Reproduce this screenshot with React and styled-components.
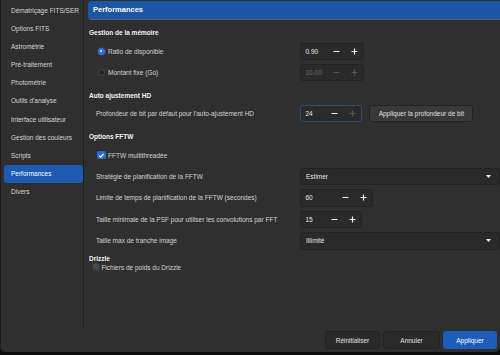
import React from 'react';
import styled, { createGlobalStyle } from 'styled-components';

//GLOBAL
const GlobalStyle = createGlobalStyle`
	html, body {
		margin: 0;
		padding: 0;
		background: #0c0c0c;
	}
	body {
		font-family: "Liberation Sans", Arial, sans-serif;
	}
`

//WINDOW
const Window = styled.div`
	width: 500px;
	height: 352px;
	background: #2f2f2f;
	border-radius: 0 0 5px 5px;
	box-shadow: inset 1px 0 0 #1c1c1c;
	display: flex;
	flex-direction: column;
	overflow: hidden;
	color: #d6d6d6;
	font-size: 6.5px;
`
const Main = styled.div`
	display: flex;
	height: 328px;
`

//SIDEBAR
const Sidebar = styled.ul`
	width: 79px;
	margin: 0;
	padding: 1.7px 0 0 4px;
	list-style: none;
	border-right: 1px solid #1f1f1f;
`
const SideItem = styled.li`
	height: 18.15px;
	line-height: 18.15px;
	padding-left: 7px;
	border-radius: 3px;
	white-space: nowrap;
	color: ${p => p.$active ? '#ffffff' : '#d4d4d4'};
	background: ${p => p.$active ? '#1d5ab2' : 'transparent'};
`

//CONTENT
const Content = styled.div`
	flex: 1;
	display: flex;
	flex-direction: column;
	padding-left: 4px;
`
const Header = styled.div`
	height: 17.5px;
	line-height: 17.5px;
	margin-top: 1px;
	padding-left: 5px;
	border-radius: 4px 0 0 4px;
	border-bottom: 1.5px solid #596071;
	background: #1b55a5;
	color: #ffffff;
	font-size: 7.5px;
	font-weight: bold;
`
const Body = styled.div`
	padding-left: 1px;
`
const Title = styled.div`
	height: ${p => p.$h || 12}px;
	line-height: ${p => p.$h || 12}px;
	margin-top: ${p => p.$top}px;
	color: #f2f2f2;
	font-weight: bold;
`
const Row = styled.div`
	display: grid;
	grid-template-columns: 211px 1fr;
	align-items: center;
	height: ${p => p.$h || 17}px;
	margin-top: ${p => p.$top}px;
`
const Label = styled.div`
	display: flex;
	align-items: center;
	gap: ${p => p.$gap || 0}px;
	padding-left: ${p => p.$indent}px;
	white-space: nowrap;
	color: #d4d4d4;
`
const Field = styled.div`
	display: flex;
	align-items: center;
	height: 100%;
`

//RADIO / CHECKBOX
const Radio = styled.span`
	box-sizing: border-box;
	flex: none;
	width: 7px;
	height: 7px;
	border-radius: 50%;
	display: flex;
	align-items: center;
	justify-content: center;
	background: ${p => p.$on ? '#2a6ad8' : '#222222'};
	border: 1px solid ${p => p.$on ? '#3b7af0' : '#484848'};
	box-shadow: ${p => p.$on ? '0 0 2px #2a6ad8' : 'none'};
	&::after {
		content: '';
		width: 2.4px;
		height: 2.4px;
		border-radius: 50%;
		background: ${p => p.$on ? '#ffffff' : 'transparent'};
	}
`
const Check = styled.span`
	box-sizing: border-box;
	flex: none;
	width: ${p => p.$size}px;
	height: ${p => p.$size}px;
	border-radius: 1.5px;
	display: flex;
	align-items: center;
	justify-content: center;
	background: ${p => p.$on ? '#2a6ad8' : '#474747'};
	border: 1px solid ${p => p.$on ? '#2a6ad8' : '#3a3a3a'};
	box-shadow: ${p => p.$on ? 'none' : 'inset 0 -1px 0 #3c3c3c'};
`

//SPINBOX
const Spin = styled.div`
	box-sizing: border-box;
	width: ${p => p.$w}px;
	height: 100%;
	display: flex;
	align-items: center;
	padding-left: 4.5px;
	background: #2a2a2a;
	border: 1px solid ${p => p.$focus ? '#2c4a7c' : '#232323'};
	border-radius: 3px;
`
const SpinValue = styled.span`
	flex: 1;
	color: ${p => p.$off ? '#6a6a6a' : '#e8e8e8'};
`
const Step = styled.span`
	width: 18px;
	display: flex;
	justify-content: center;
	color: ${p => p.$off ? '#555555' : '#eeeeee'};
`

//COMBO
const Combo = styled.div`
	box-sizing: border-box;
	width: 100%;
	height: 100%;
	display: flex;
	align-items: center;
	justify-content: space-between;
	padding: 0 8px 0 5px;
	background: #2a2a2a;
	border: 1px solid #232323;
	border-radius: 3px;
	color: #e4e4e4;
`

//BUTTONS
const Button = styled.button`
	box-sizing: border-box;
	width: ${p => p.$w}px;
	height: ${p => p.$h || 17.6}px;
	margin-left: ${p => p.$left || 0}px;
	padding: 0;
	font-family: inherit;
	font-size: 6.5px;
	color: ${p => p.$primary ? '#ffffff' : '#e0e0e0'};
	background: ${p => p.$primary ? '#1e5dbd' : p.$raised ? '#393939' : '#2a2a2a'};
	border: 1px solid ${p => p.$primary ? '#1e5dbd' : '#222222'};
	border-radius: 3px;
`
const Footer = styled.div`
	flex: 1;
	display: flex;
	align-items: center;
	justify-content: flex-end;
	gap: 3px;
	padding-right: 3px;
`

//ICONS
const Minus = () => (
	<svg width='7' height='7' viewBox='0 0 7 7'>
		<path d='M0.5 3.5H6.5' stroke='currentColor' strokeWidth='1.2' />
	</svg>
)
const Plus = () => (
	<svg width='7' height='7' viewBox='0 0 7 7'>
		<path d='M0.5 3.5H6.5M3.5 0.5V6.5' stroke='currentColor' strokeWidth='1.2' />
	</svg>
)
const Arrow = () => (
	<svg width='5' height='3' viewBox='0 0 5 3'>
		<path d='M0 0H5L2.5 3Z' fill='#f0f0f0' />
	</svg>
)
const Tick = () => (
	<svg width='7' height='7' viewBox='0 0 7 7'>
		<path d='M1.2 3.6L2.9 5.3L5.9 1.8' stroke='#ffffff' strokeWidth='1.3' fill='none' />
	</svg>
)

const SpinBox = ({ w, value, off, focus, upOff }) => (
	<Spin $w={w} $focus={focus}>
		<SpinValue $off={off}>{value}</SpinValue>
		<Step $off={off}><Minus /></Step>
		<Step $off={off || upOff}><Plus /></Step>
	</Spin>
)

const pages = [
	'Dématriçage FITS/SER',
	'Options FITS',
	'Astrométrie',
	'Pré-traitement',
	'Photométrie',
	"Outils d'analyse",
	'Interface utilisateur',
	'Gestion des couleurs',
	'Scripts',
	'Performances',
	'Divers',
]

//APP
const App = () => {
	return (
		<Window>
			<GlobalStyle />
			<Main>
				<Sidebar>
					{pages.map(page => (
						<SideItem key={page} $active={page === 'Performances'}>{page}</SideItem>
					))}
				</Sidebar>
				<Content>
					<Header>Performances</Header>
					<Body>
						<Title $top={7.5}>Gestion de la mémoire</Title>
						<Row $top={3.6}>
							<Label $indent={8.5} $gap={3.5}><Radio $on />Ratio de disponible</Label>
							<Field><SpinBox w={64} value='0.90' /></Field>
						</Row>
						<Row $top={4}>
							<Label $indent={8.5} $gap={3.5}><Radio />Montant fixe (Go)</Label>
							<Field><SpinBox w={64} value='10.00' off /></Field>
						</Row>
						<Title $top={9}>Auto ajustement HD</Title>
						<Row $top={3.3} $h={17.4}>
							<Label $indent={7}>Profondeur de bit par défaut pour l'auto-ajustement HD</Label>
							<Field>
								<SpinBox w={62} value='24' focus upOff />
								<Button $w={104} $h={17.4} $left={7.3} $raised>Appliquer la profondeur de bit</Button>
							</Field>
						</Row>
						<Title $top={8.3}>Options FFTW</Title>
						<Row $top={6.5} $h={12}>
							<Label $indent={8.3} $gap={2.2}><Check $size={8.6} $on><Tick /></Check>FFTW multithreadée</Label>
						</Row>
						<Row $top={6.8}>
							<Label $indent={7}>Stratégie de planification de la FFTW</Label>
							<Field><Combo>Estimer<Arrow /></Combo></Field>
						</Row>
						<Row $top={4} $h={17.7}>
							<Label $indent={7}>Limite de temps de planification de la FFTW (secondes)</Label>
							<Field><SpinBox w={73} value='60' /></Field>
						</Row>
						<Row $top={4} $h={17.7}>
							<Label $indent={7}>Taille minimale de la PSF pour utiliser les convolutions par FFT</Label>
							<Field><SpinBox w={62} value='15' /></Field>
						</Row>
						<Row $top={3.6} $h={17.7}>
							<Label $indent={7}>Taille max de tranche image</Label>
							<Field><Combo>Illimité<Arrow /></Combo></Field>
						</Row>
						<Title $top={4} $h={9}>Drizzle</Title>
						<Row $top={0.3} $h={9}>
							<Label $indent={2.7} $gap={1.7}><Check $size={8} />Fichiers de poids du Drizzle</Label>
						</Row>
					</Body>
				</Content>
			</Main>
			<Footer>
				<Button $w={55}>Réinitialiser</Button>
				<Button $w={57}>Annuler</Button>
				<Button $w={54} $primary>Appliquer</Button>
			</Footer>
		</Window>
	)
}

export default App;
